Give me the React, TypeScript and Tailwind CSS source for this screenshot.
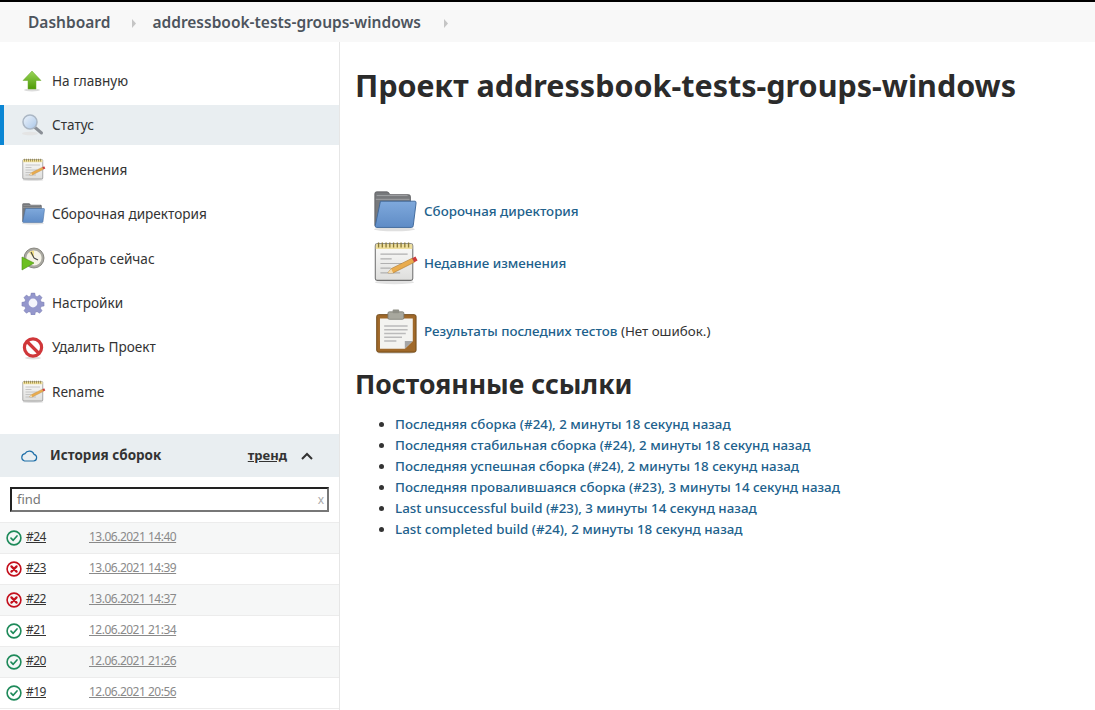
import React from 'react';

type IconProps = { className?: string };

const ArrowUp = ({ className }: IconProps) => (
  <svg viewBox="0 0 24 24" className={className}>
    <defs>
      <linearGradient id="up" x1="0" y1="0" x2="0" y2="1">
        <stop offset="0" stopColor="#9ad65a" />
        <stop offset="1" stopColor="#4e9a06" />
      </linearGradient>
    </defs>
    <ellipse cx="11" cy="21" rx="8" ry="1.4" fill="#dcdcdc" />
    <path d="M11 2 L20 11.5 H15 V20 H7 V11.5 H2 Z" fill="url(#up)" stroke="#6aa82c" strokeWidth="0.5" />
  </svg>
);

const Search = ({ className }: IconProps) => (
  <svg viewBox="0 0 24 24" className={className}>
    <defs>
      <linearGradient id="glass" x1="0" y1="0" x2="1" y2="1">
        <stop offset="0" stopColor="#eef4fb" />
        <stop offset="1" stopColor="#a9c6e8" />
      </linearGradient>
    </defs>
    <ellipse cx="9" cy="20.5" rx="8" ry="1.8" fill="#e4e4e4" />
    <path d="M13.5 14 L20.5 20" stroke="#8a8f96" strokeWidth="3" strokeLinecap="round" />
    <circle cx="9" cy="9" r="7" fill="url(#glass)" stroke="#aab6c4" strokeWidth="1.5" />
  </svg>
);

const Notepad = ({ className }: IconProps) => (
  <svg viewBox="0 2 48 48" className={`overflow-visible ${className ?? ''}`}>
    <defs>
      <linearGradient id="paper" x1="0" y1="0" x2="0" y2="1">
        <stop offset="0" stopColor="#fbfbfa" />
        <stop offset="1" stopColor="#dededc" />
      </linearGradient>
    </defs>
    <ellipse cx="24" cy="46" rx="21" ry="2" fill="#e2e2e2" />
    <rect x="3.5" y="5" width="40" height="39" rx="2" fill="url(#paper)" stroke="#6f6f6f" strokeWidth="1.1" />
    <rect x="4" y="5.5" width="39" height="5" fill="#efdf9c" />
    <path d="M7 3.5 V9 M11 3.5 V9 M15 3.5 V9 M19 3.5 V9 M23 3.5 V9 M27 3.5 V9 M31 3.5 V9 M35 3.5 V9 M39 3.5 V9" stroke="#8a7a36" strokeWidth="1.4" />
    <path d="M9 16 H38 M9 21 H21 M9 26 H32 M9 31 H20 M9 36 H30" stroke="#b0b0b0" strokeWidth="1.3" />
    <path d="M17 36 L20.4 31.5 L42.9 20.3 L45.1 24.7 L22.6 36 Z" fill="#e9ac4e" stroke="#a8742a" strokeWidth="0.6" />
    <path d="M42.9 20.3 L46.4 18.5 L48.6 22.9 L45.1 24.7 Z" fill="#cc3a3a" />
    <path d="M17 36 L20.4 31.5 L22.6 36 Z" fill="#f3dcb0" />
  </svg>
);

const Folder = ({ className }: IconProps) => (
  <svg viewBox="0 0 48 48" className={className}>
    <defs>
      <linearGradient id="front" x1="0" y1="0" x2="0" y2="1">
        <stop offset="0" stopColor="#7fa9dc" />
        <stop offset="1" stopColor="#5f8cc6" />
      </linearGradient>
    </defs>
    <ellipse cx="24" cy="43" rx="22" ry="2" fill="#e0e0e0" />
    <path d="M3 5 Q3 3 5 3 H16 Q18 3 19 6 H39 Q41 6 41 8 V39 H3 Z" fill="#77797c" stroke="#55575a" strokeWidth="0.8" />
    <path d="M5 7 H38 M4 11 H40" stroke="#a2a4a6" strokeWidth="1" />
    <path d="M9 13 H46 Q47 13 47 15 L44 39 Q44 41 42 41 H5 Q3 41 3.5 39 Z" fill="url(#front)" stroke="#3f679a" strokeWidth="1" />
  </svg>
);

const Clock = ({ className }: IconProps) => (
  <svg viewBox="0 0 24 24" className={className}>
    <circle cx="13" cy="11" r="10" fill="#aaa9a2" stroke="#77766f" strokeWidth="0.8" />
    <circle cx="13" cy="11" r="7.6" fill="#f5f3e6" />
    <path d="M13 11 V3.5 A7.5 7.5 0 0 0 8 5.5 Z" fill="#f1e08a" />
    <path d="M13 11 L10 5 M13 11 L17 13" stroke="#444" strokeWidth="1.1" />
    <path d="M1 10 L13 16 L1 23 Z" fill="#6cbf1f" stroke="#4b8f10" strokeWidth="0.6" />
  </svg>
);

const Gear = ({ className }: IconProps) => (
  <svg viewBox="0 0 24 24" className={className}>
    <path
      d="M10 1 h4 l.6 3.2 2 .8 2.7-1.8 2.8 2.8-1.8 2.7 .8 2 3.2.6 v4 l-3.2.6 -.8 2 1.8 2.7 -2.8 2.8 -2.7-1.8 -2 .8 -.6 3.2 h-4 l-.6-3.2 -2-.8 -2.7 1.8 -2.8-2.8 1.8-2.7 -.8-2 -3.2-.6 v-4 l3.2-.6 .8-2 -1.8-2.7 2.8-2.8 2.7 1.8 2-.8 Z"
      fill="#9497cc"
      stroke="#7477aa"
      strokeWidth="0.5"
      transform="translate(1.2 1.2) scale(0.9)"
    />
    <circle cx="12" cy="12" r="4.4" fill="#f4f4fb" />
  </svg>
);

const NoEntry = ({ className }: IconProps) => (
  <svg viewBox="0 0 24 24" className={className}>
    <ellipse cx="12" cy="22" rx="8" ry="1.5" fill="#e0e0e0" />
    <circle cx="12" cy="11.5" r="8.6" fill="#fff" stroke="#d0373a" strokeWidth="3.2" />
    <path d="M6 5.5 L18 17.5" stroke="#d0373a" strokeWidth="3.2" />
  </svg>
);

const Clipboard = ({ className }: IconProps) => (
  <svg viewBox="0 0 48 48" className={className}>
    <ellipse cx="25" cy="47" rx="19" ry="1.6" fill="#e0e0e0" />
    <rect x="5" y="6" width="42" height="40" rx="2" fill="#a0692a" stroke="#6e4716" strokeWidth="1" />
    <path d="M8.5 10 H43.5 V34 L35 42.5 H8.5 Z" fill="#f3f3f0" />
    <path d="M35 42.5 V34 H43.5 Z" fill="#a5a5a5" />
    <rect x="17" y="3" width="17" height="8" rx="1.5" fill="#a8a89e" stroke="#77776e" strokeWidth="0.8" />
    <rect x="22" y="0.5" width="7" height="4" rx="1" fill="#8f8f86" />
    <path d="M13 18 H38 M13 22 H38 M13 26 H36 M13 30 H32 M13 34 H26" stroke="#bbbbbb" strokeWidth="1.6" />
  </svg>
);

const Ok = () => (
  <svg viewBox="0 0 16 16" className="w-[16px] h-[16px] shrink-0">
    <circle cx="8" cy="8" r="6.9" fill="none" stroke="#1e8a5a" strokeWidth="1.6" />
    <path d="M5 8.2 L7.2 10.3 L11 6" fill="none" stroke="#1e8a5a" strokeWidth="1.7" strokeLinecap="round" strokeLinejoin="round" />
  </svg>
);

const Failed = () => (
  <svg viewBox="0 0 16 16" className="w-[16px] h-[16px] shrink-0">
    <circle cx="8" cy="8" r="6.9" fill="none" stroke="#c4101d" strokeWidth="1.6" />
    <path d="M5.4 5.4 L10.6 10.6 M10.6 5.4 L5.4 10.6" fill="none" stroke="#c4101d" strokeWidth="2.2" strokeLinecap="round" />
  </svg>
);

const Caret = () => (
  <svg viewBox="0 0 4 9" className="w-[4px] h-[9px]">
    <path d="M0 0 L4 4.5 L0 9 Z" fill="#c5c5c5" />
  </svg>
);

const navItems = [
  { label: 'На главную', Icon: ArrowUp },
  { label: 'Статус', Icon: Search, active: true },
  { label: 'Изменения', Icon: Notepad },
  { label: 'Сборочная директория', Icon: Folder },
  { label: 'Собрать сейчас', Icon: Clock },
  { label: 'Настройки', Icon: Gear },
  { label: 'Удалить Проект', Icon: NoEntry },
  { label: 'Rename', Icon: Notepad },
];

const builds = [
  { id: '#24', date: '13.06.2021 14:40', ok: true },
  { id: '#23', date: '13.06.2021 14:39', ok: false },
  { id: '#22', date: '13.06.2021 14:37', ok: false },
  { id: '#21', date: '12.06.2021 21:34', ok: true },
  { id: '#20', date: '12.06.2021 21:26', ok: true },
  { id: '#19', date: '12.06.2021 20:56', ok: true },
];

const permalinks = [
  'Последняя сборка (#24), 2 минуты 18 секунд назад',
  'Последняя стабильная сборка (#24), 2 минуты 18 секунд назад',
  'Последняя успешная сборка (#24), 2 минуты 18 секунд назад',
  'Последняя провалившаяся сборка (#23), 3 минуты 14 секунд назад',
  'Last unsuccessful build (#23), 3 минуты 14 секунд назад',
  'Last completed build (#24), 2 минуты 18 секунд назад',
];

export default function App() {
  return (
    <div className="w-[1095px] h-[710px] overflow-hidden bg-white text-[#333] font-['Noto_Sans','Open_Sans',sans-serif]">
      {/* Breadcrumb */}
      <div className="h-[42px] border-t-2 border-black bg-[#f8f8f8] flex items-center pl-[28px] text-[15.5px] font-semibold text-[#4d545d]">
        <span className="pt-[2px]">Dashboard</span>
        <span className="ml-[22px] mr-[16px] flex pt-[2px]"><Caret /></span>
        <span className="pt-[2px]">addressbook-tests-groups-windows</span>
        <span className="ml-[23px] flex pt-[2px]"><Caret /></span>
      </div>

      <div className="flex h-[668px]">
        {/* Sidebar */}
        <aside className="w-[340px] shrink-0 border-r border-[#e6e6e6] flex flex-col">
          <nav className="pt-[19px] flex flex-col gap-[4.45px]">
            {navItems.map(({ label, Icon, active }) => (
              <div
                key={label}
                className={`h-[40px] flex items-center text-[13.6px] text-[#333] border-l-4 pl-[17px] ${active ? 'bg-[#e9eef1] border-[#0b86d4]' : 'border-transparent'}`}
              >
                <Icon className="w-[24px] h-[24px] shrink-0" />
                <span className="ml-[7px]">{label}</span>
              </div>
            ))}
          </nav>

          {/* Build history */}
          <div className="mt-[22px] h-[43px] bg-[#e9eef1] flex items-center pl-[20px] pr-[26px] shrink-0">
            <svg viewBox="0 0 18 12" className="w-[18px] h-[12px] shrink-0">
              <path d="M4.5 11 H13.5 A3.4 3.4 0 0 0 14 4.3 A5 5 0 0 0 5 3.6 A3.8 3.8 0 0 0 4.5 11 Z" fill="none" stroke="#1f6fa8" strokeWidth="1.2" />
            </svg>
            <span className="ml-[12px] text-[13.5px] leading-[18px] mb-[2px] font-bold text-[#333]">История сборок</span>
            <span className="ml-auto text-[13px] leading-[18px] mb-[2px] font-bold underline text-[#333]">тренд</span>
            <svg viewBox="0 0 12 8" className="ml-[14px] w-[12px] h-[8px]">
              <path d="M1 7 L6 2 L11 7" fill="none" stroke="#333" strokeWidth="2" />
            </svg>
          </div>

          <div className="p-[10px] shrink-0">
            <div className="h-[25px] border-2 border-t-[#222] border-l-[#222] border-r-[#777] border-b-[#777] flex items-center justify-between pl-[5px] pr-[3px] pt-[1px] text-[13px] text-[#777]">
              <span>find</span>
              <span className="text-[#aaa] text-[12px]">x</span>
            </div>
          </div>

          <div className="border-t border-[#ececec]">
            {builds.map((b, i) => (
              <div
                key={b.id}
                className={`h-[31px] flex items-center border-b border-[#ececec] pl-[6px] text-[12px] tracking-[-0.5px] ${i % 2 === 0 ? 'bg-[#f6f7f7]' : 'bg-white'}`}
              >
                {b.ok ? <Ok /> : <Failed />}
                <span className="ml-[4px] w-[63px] mb-[2px] underline text-[#333]">{b.id}</span>
                <span className="mb-[2px] underline text-[#8a8a8a]">{b.date}</span>
              </div>
            ))}
          </div>
        </aside>

        {/* Main */}
        <main className="flex-1 pl-[16px]">
          <h1 className="mt-[23px] -ml-px text-[30.5px] leading-[40px] font-bold text-[#2b2b2b] whitespace-nowrap">
            Проект addressbook-tests-groups-windows
          </h1>

          <div className="mt-[82px] pl-[16px] text-[13.35px]">
            <div className="flex items-center h-[48px] gap-[7px]">
              <Folder className="w-[45px] h-[45px]" />
              <a className="font-medium text-[#21618c]">Сборочная директория</a>
            </div>
            <div className="flex items-center h-[48px] mt-[4px] gap-[7px]">
              <Notepad className="w-[45px] h-[45px]" />
              <a className="font-medium text-[#21618c]">Недавние изменения</a>
            </div>
            <div className="flex items-center h-[48px] mt-[20px] gap-[7px]">
              <Clipboard className="w-[45px] h-[45px]" />
              <span>
                <a className="font-medium text-[#21618c]">Результаты последних тестов</a> (Нет ошибок.)
              </span>
            </div>
          </div>

          <h2 className="mt-[13px] -ml-px text-[26.6px] leading-[32px] font-bold text-[#2b2b2b]">Постоянные ссылки</h2>

          <ul className="mt-[14px] pl-[39px] list-disc text-[13.35px] leading-[21px] text-[#333]">
            {permalinks.map(link => (
              <li key={link}>
                <a className="font-medium text-[#21618c]">{link}</a>
              </li>
            ))}
          </ul>
        </main>
      </div>
    </div>
  );
}
